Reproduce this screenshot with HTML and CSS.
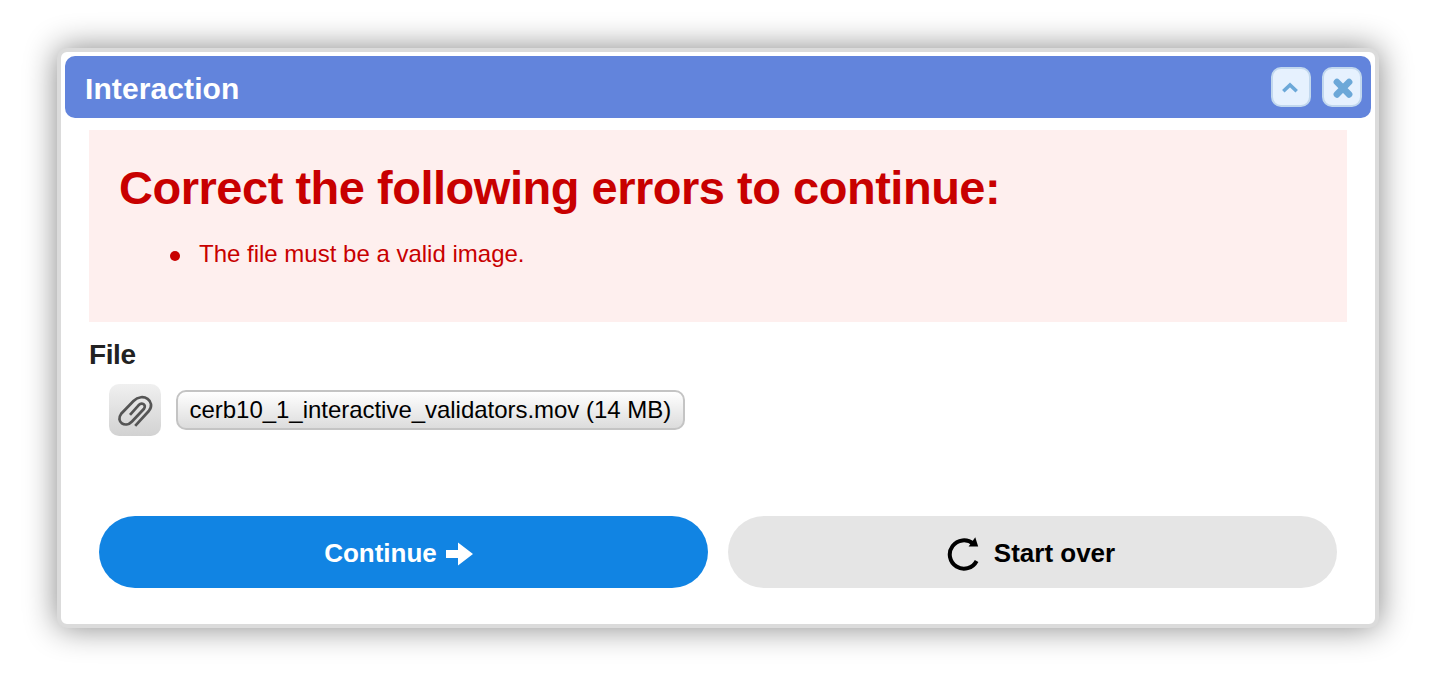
FILE: index.html
```html
<!DOCTYPE html>
<html lang="en">
<head>
<meta charset="utf-8">
<title>Interaction</title>
<link rel="stylesheet" href="styles.css">
</head>
<body>
<main class="dialog">
  <header class="titlebar">
    <h2 class="title"><span>Interaction</span></h2>
    <button class="tool" aria-label="Collapse">
      <svg width="36" height="36" viewBox="0 0 36 36"><path d="M10.3 22.3 L17 16 L23.7 22.3" fill="none" stroke="#6ca8d8" stroke-width="3.6"/></svg>
    </button>
    <button class="tool" aria-label="Close">
      <svg width="36" height="36" viewBox="0 0 36 36"><path d="M12.9 13 L25.1 25.4 M25.1 13 L12.9 25.4" fill="none" stroke="#6ca8d8" stroke-width="6.6" stroke-linecap="round"/></svg>
    </button>
  </header>
  <section class="content">
    <div class="errors">
      <h1 class="errors-title"><span>Correct the following errors to continue:</span></h1>
      <ul class="errors-list"><li class="errors-item"><span>The file must be a valid image.</span></li></ul>
    </div>
    <h3 class="label"><span>File</span></h3>
    <div class="file-row">
      <button class="attach" aria-label="Attach file">
        <svg width="52" height="52" viewBox="0 0 52 52"><path d="M21 30.8 L29.5 21.3 C32.8 17.8 37.8 20.6 35 24.8 L23 37.5 C16.5 44.5 6.2 38 12.2 29.7 L24.5 17 C34 7.5 47.5 17.5 39.8 27 L26.2 41.8" fill="none" stroke="#555" stroke-width="2.7"/></svg>
      </button>
      <div class="file-chip"><span>cerb10_1_interactive_validators.mov (14 MB)</span></div>
    </div>
    <div class="actions">
      <button class="action primary"><span>Continue</span>
        <svg class="arrow" width="28" height="24" viewBox="0 0 28 24"><path d="M0 8 H12 V0.5 L27 12 L12 23.5 V16 H0Z" fill="#fff"/></svg>
      </button>
      <button class="action secondary">
        <svg class="restart" width="34" height="36" viewBox="0 0 34 36"><path d="M26.3 7.8 A14.2 14.2 0 1 0 29.6 25" fill="none" stroke="#000" stroke-width="4"/><path d="M28.3 1.2 L31.2 10.4 H21.6Z" fill="#000"/></svg>
        <span>Start over</span>
      </button>
    </div>
  </section>
</main>
</body>
</html>
```

FILE: styles.css
```css
* { box-sizing: border-box; }
body {
  margin: 0;
  padding: 48px 59px 54px 57px;
  background: #fff;
  font-family: "Liberation Sans", Arial, sans-serif;
}
h1, h2, h3, ul { margin: 0; padding: 0; }
svg { display: block; flex: none; }
button { font: inherit; padding: 0; border: 0; }
.dialog {
  height: 580px;
  padding: 4px;
  border: 4px solid #dbdbdb;
  border-radius: 10px;
  background: #fff;
  box-shadow: 0 0 32px rgba(0, 0, 0, .48);
}
.titlebar {
  display: flex;
  align-items: center;
  gap: 11px;
  height: 62px;
  padding: 0 9px 0 20px;
  border-radius: 10px;
  background: #6284dc;
}
.title {
  flex: 1;
  padding-top: 3px;
  color: #fff;
  font-size: 30px;
  line-height: 36px;
  letter-spacing: .1px;
}
.tool {
  width: 40px;
  height: 40px;
  border: 2px solid #c2d8ee;
  border-radius: 10px;
  background: #e6f1fe;
}
.content { padding: 12px 24px 0; }
.errors {
  height: 192px;
  padding: 30px;
  background: #feefee;
  color: #c80000;
}
.errors-title {
  font-size: 47px;
  line-height: 56px;
  letter-spacing: -.48px;
  white-space: nowrap;
}
.errors-list { margin-top: 24px; padding-left: 51px; list-style: none; }
.errors-item {
  display: flex;
  align-items: center;
  gap: 19px;
  font-size: 24px;
  line-height: 28px;
}
.errors-item::before {
  content: "";
  width: 10px;
  height: 10px;
  margin-top: 4px;
  border-radius: 50%;
  background: #c80000;
}
.label {
  margin: 17px 0 13px;
  color: #222;
  font-size: 28px;
  line-height: 32px;
  letter-spacing: -.4px;
}
.file-row {
  display: flex;
  align-items: center;
  gap: 15px;
  padding-left: 20px;
}
.attach {
  width: 52px;
  height: 52px;
  border-radius: 10px;
  background: linear-gradient(#f0f0f0, #d2d2d2);
}
.file-chip {
  width: 509px;
  height: 40px;
  padding-left: 11.5px;
  border: 2px solid #c4c4c4;
  border-radius: 10px;
  background: linear-gradient(#fff, #dcdcdc);
  color: #000;
  font-size: 24px;
  line-height: 36px;
  letter-spacing: -.03px;
  white-space: nowrap;
}
.actions {
  display: grid;
  grid-template-columns: 1fr 1fr;
  gap: 20px;
  margin-top: 80px;
  padding: 0 10px;
}
.action {
  display: flex;
  align-items: center;
  justify-content: center;
  height: 72px;
  padding-top: 1px;
  border-radius: 36px;
  font-size: 26px;
  font-weight: bold;
  line-height: 32px;
}
.primary { gap: 9px; padding-right: 9px; background: #1184e3; color: #fff; }
.secondary { gap: 13px; padding-right: 3px; background: #e5e5e5; color: #000; }
.arrow { margin-top: 3px; }
.restart { margin-top: 2px; }
```
